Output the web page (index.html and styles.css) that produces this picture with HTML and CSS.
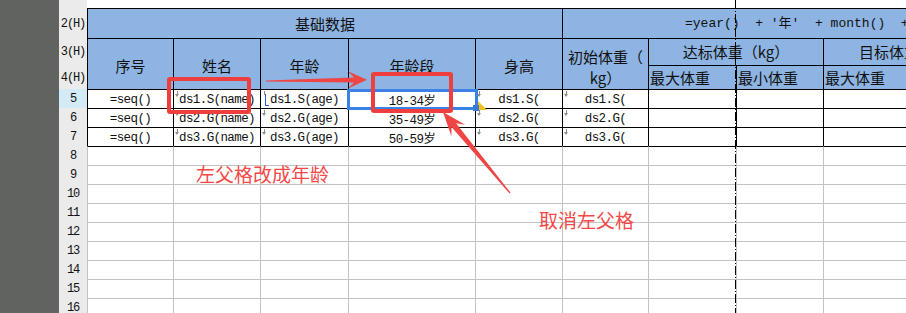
FILE: index.html
```html
<!DOCTYPE html>
<html lang="zh-CN">
<head>
    <meta charset="UTF-8">
    <meta name="viewport" content="width=device-width, initial-scale=1.0">
    <title>报表设计</title>
    <link rel="stylesheet" href="styles.css">
</head>
<body>
<div class="app">
    <div class="side"></div>

    <div class="sheet">
        <!-- row 1 (mostly scrolled away) -->
        <div class="row">
            <div class="rh"></div>
            <div class="blank"></div>
        </div>

        <!-- header rows -->
        <div class="row">
            <div class="rh">2(H)</div>
            <div class="c hd span5">基础数据</div>
            <div class="c hd span4 formula">=year()&nbsp; + '年'&nbsp; + month()&nbsp; + '</div>
        </div>
        <div class="row">
            <div class="rh">3(H)</div>
            <div class="c hd tall">序号</div>
            <div class="c hd tall">姓名</div>
            <div class="c hd tall">年龄</div>
            <div class="c hd tall">年龄段</div>
            <div class="c hd tall">身高</div>
            <div class="c hd tall wrap">初始体重（<br>kg）</div>
            <div class="c hd span2">达标体重（kg）</div>
            <div class="c hd cut">目标体重（kg）</div>
        </div>
        <div class="row">
            <div class="rh">4(H)</div>
            <div class="c hd left">最大体重</div>
            <div class="c hd left">最小体重</div>
            <div class="c hd left">最大体重</div>
        </div>

        <!-- data rows -->
        <div class="row">
            <div class="rh sel">5</div>
            <div class="c d">=seq()</div>
            <div class="c d exp">ds1.S(name)</div>
            <div class="c d lp">ds1.S(age)</div>
            <div class="c d">18-34岁</div>
            <div class="c d exp">ds1.S(</div>
            <div class="c d exp">ds1.S(</div>
            <div class="c d"></div>
            <div class="c d"></div>
            <div class="c d"></div>
        </div>
        <div class="row">
            <div class="rh">6</div>
            <div class="c d">=seq()</div>
            <div class="c d exp">ds2.G(name)</div>
            <div class="c d exp">ds2.G(age)</div>
            <div class="c d">35-49岁</div>
            <div class="c d exp">ds2.G(</div>
            <div class="c d exp">ds2.G(</div>
            <div class="c d"></div>
            <div class="c d"></div>
            <div class="c d"></div>
        </div>
        <div class="row">
            <div class="rh">7</div>
            <div class="c d">=seq()</div>
            <div class="c d exp">ds3.G(name)</div>
            <div class="c d exp">ds3.G(age)</div>
            <div class="c d">50-59岁</div>
            <div class="c d exp">ds3.G(</div>
            <div class="c d exp">ds3.G(</div>
            <div class="c d"></div>
            <div class="c d"></div>
            <div class="c d"></div>
        </div>

        <!-- empty grid -->
        <div class="row">
            <div class="rh">8</div>
            <div class="c g first"></div><div class="c g first"></div><div class="c g first"></div>
            <div class="c g first"></div><div class="c g first"></div><div class="c g first"></div>
            <div class="c g first"></div><div class="c g first"></div><div class="c g first"></div>
        </div>
        <div class="row">
            <div class="rh">9</div>
            <div class="c g"></div><div class="c g"></div><div class="c g"></div>
            <div class="c g"></div><div class="c g"></div><div class="c g"></div>
            <div class="c g"></div><div class="c g"></div><div class="c g"></div>
        </div>
        <div class="row">
            <div class="rh">10</div>
            <div class="c g"></div><div class="c g"></div><div class="c g"></div>
            <div class="c g"></div><div class="c g"></div><div class="c g"></div>
            <div class="c g"></div><div class="c g"></div><div class="c g"></div>
        </div>
        <div class="row">
            <div class="rh">11</div>
            <div class="c g"></div><div class="c g"></div><div class="c g"></div>
            <div class="c g"></div><div class="c g"></div><div class="c g"></div>
            <div class="c g"></div><div class="c g"></div><div class="c g"></div>
        </div>
        <div class="row">
            <div class="rh">12</div>
            <div class="c g"></div><div class="c g"></div><div class="c g"></div>
            <div class="c g"></div><div class="c g"></div><div class="c g"></div>
            <div class="c g"></div><div class="c g"></div><div class="c g"></div>
        </div>
        <div class="row">
            <div class="rh">13</div>
            <div class="c g"></div><div class="c g"></div><div class="c g"></div>
            <div class="c g"></div><div class="c g"></div><div class="c g"></div>
            <div class="c g"></div><div class="c g"></div><div class="c g"></div>
        </div>
        <div class="row">
            <div class="rh">14</div>
            <div class="c g"></div><div class="c g"></div><div class="c g"></div>
            <div class="c g"></div><div class="c g"></div><div class="c g"></div>
            <div class="c g"></div><div class="c g"></div><div class="c g"></div>
        </div>
        <div class="row">
            <div class="rh">15</div>
            <div class="c g"></div><div class="c g"></div><div class="c g"></div>
            <div class="c g"></div><div class="c g"></div><div class="c g"></div>
            <div class="c g"></div><div class="c g"></div><div class="c g"></div>
        </div>
        <div class="row">
            <div class="rh">16</div>
            <div class="c g"></div><div class="c g"></div><div class="c g"></div>
            <div class="c g"></div><div class="c g"></div><div class="c g"></div>
            <div class="c g"></div><div class="c g"></div><div class="c g"></div>
        </div>
    </div>

    <!-- page break line -->
    <div class="pagebreak"></div>

    <!-- selected cell -->
    <div class="flag"></div>
    <div class="selbox"></div>
    <div class="handle"></div>

    <!-- annotations -->
    <div class="mark m1"></div>
    <div class="mark m2"></div>
    <svg class="arrows" width="906" height="313" viewBox="0 0 906 313">
        <polygon points="266,80.4 354,77.6 348,71.2 367,79.8 348,88.6 354,82.4 266,81.6" fill="#f04545"/>
        <polygon points="510.5,192.6 456.1,123.2 465.2,124.8 443,112 451.4,136.2 451.5,127 509.5,193.4" fill="#f04545"/>
    </svg>
    <div class="note n1">左父格改成年龄</div>
    <div class="note n2">取消左父格</div>
</div>
</body>
</html>
```

FILE: styles.css
```css
* {
    box-sizing: border-box;
}

body {
    margin: 0;
    background-color: #ffffff;
    font-family: "Noto Sans CJK SC", sans-serif;
    overflow: hidden;
}

.app {
    position: relative;
    display: flex;
    width: 906px;
    height: 313px;
    overflow: hidden;
}

.side {
    flex: none;
    width: 59px;
    background-color: #616361;
}

.sheet {
    flex: 1;
    display: grid;
    grid-template-columns: 28px 86px 87px 88px 127px 87px 86px 88px 87px 1fr;
    grid-template-rows: 8px 30px 27px 24px repeat(12, 19px);
    overflow: hidden;
}

.row {
    display: contents;
}

/* row numbers */
.rh {
    display: flex;
    align-items: center;
    justify-content: center;
    background-color: #ebebeb;
    color: #111;
    font-family: "Liberation Mono", monospace;
    font-size: 12px;
    letter-spacing: -1.1px;
    padding-top: 1px;
}

.rh.sel {
    background-color: #d3ebf7;
}

.blank {
    grid-column: span 9;
}

/* cells */
.c {
    position: relative;
    display: flex;
    align-items: center;
    justify-content: center;
    border-left: 1px solid #000;
    border-top: 1px solid #000;
    white-space: nowrap;
    overflow: hidden;
}

.hd {
    background-color: #8db4e2;
    color: #111;
    font-size: 15px;
    line-height: 18px;
    text-align: center;
}

.span5 { grid-column: span 5; }
.span4 { grid-column: span 4; }
.span2 { grid-column: span 2; }
.tall {
    grid-row: span 2;
    padding-top: 3px;
}

.hd.wrap {
    line-height: 21px;
    padding-top: 5px;
}

.hd.left {
    justify-content: flex-start;
    padding-left: 1px;
}

.formula {
    justify-content: flex-start;
    padding-left: 122px;
    font-family: "Liberation Mono", "Noto Sans CJK SC", monospace;
    font-size: 13px;
}

.cut {
    justify-content: flex-start;
    padding-left: 35px;
}

.d {
    color: #111;
    font-family: "Liberation Mono", "Noto Sans CJK SC", monospace;
    font-size: 12.5px;
    letter-spacing: -0.6px;
    padding-top: 1px;
}

.g {
    border-left-color: #c2c2c2;
    border-top-color: #c2c2c2;
}

.g.first {
    border-top-color: #000;
}

/* expand direction marks */
.exp::before,
.lp::before {
    content: "";
    position: absolute;
    left: 3px;
    top: 1px;
    width: 1px;
    height: 4px;
    background-color: #8c8c8c;
}

.exp::after {
    content: "";
    position: absolute;
    left: 1px;
    top: 4px;
    border-left: 2.5px solid transparent;
    border-right: 2.5px solid transparent;
    border-top: 3px solid #8c8c8c;
}

.lp::after {
    content: "";
    position: absolute;
    left: 4px;
    top: 4px;
    width: 3px;
    height: 11px;
    border-left: 1.5px solid #2a5ce0;
    border-bottom: 1.5px solid #2a5ce0;
}

/* page break */
.pagebreak {
    position: absolute;
    left: 735px;
    top: 0;
    width: 1px;
    height: 313px;
    background: repeating-linear-gradient(to bottom, #000 0, #000 9px, transparent 9px, transparent 11px, #000 11px, #000 12px, transparent 12px, transparent 14px);
}

/* selection */
.selbox {
    position: absolute;
    left: 347px;
    top: 89px;
    width: 131px;
    height: 21px;
    border: 3px solid #3b82e6;
}

.handle {
    position: absolute;
    left: 473px;
    top: 105px;
    width: 6px;
    height: 6px;
    background-color: #3a78d6;
}

.flag {
    position: absolute;
    left: 478px;
    top: 101px;
    width: 0;
    height: 0;
    border-top: 9px solid transparent;
    border-left: 9px solid #f1c21b;
}

/* annotations */
.mark {
    position: absolute;
    border: 4px solid #ef3e3e;
    border-radius: 3px;
}

.m1 {
    left: 167px;
    top: 77px;
    width: 84px;
    height: 37px;
}

.m2 {
    left: 371px;
    top: 72px;
    width: 82px;
    height: 41px;
}

.arrows {
    position: absolute;
    left: 0;
    top: 0;
    pointer-events: none;
}

.note {
    position: absolute;
    color: #f44848;
    font-size: 19px;
    line-height: 22px;
    white-space: nowrap;
}

.n1 {
    left: 196px;
    top: 163px;
}

.n2 {
    left: 539px;
    top: 209px;
}
```
